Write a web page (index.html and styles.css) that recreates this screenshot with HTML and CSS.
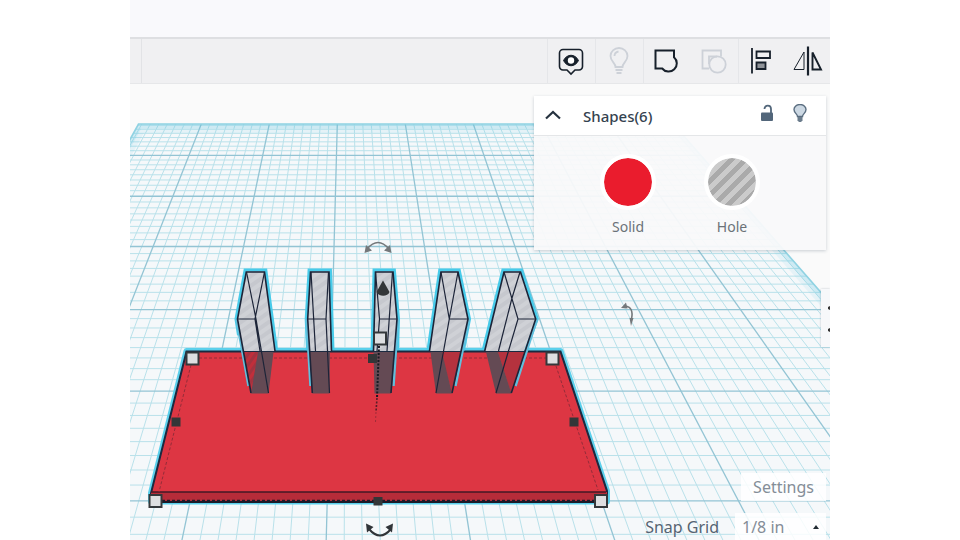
FILE: index.html
```html
<!DOCTYPE html>
<html lang="en">
<head>
<meta charset="utf-8">
<title>3D design editor</title>
<link rel="stylesheet" href="styles.css">
</head>
<body>
<div class="app">
  <header class="topbar"></header>
  <nav class="toolbar" aria-label="Tools">
    <div class="toolbar-lead"></div>
    <button class="tool" aria-label="Show all">
      <svg width="32" height="32" viewBox="0 0 32 32" fill="none" stroke="#17202b" stroke-width="1.6">
        <path d="M8 3.500h16a3.500 3.500 0 0 1 3.500 3.500v13.500a3.500 3.500 0 0 1-3.500 3.500h-4l-4 4-4-4H8A3.500 3.500 0 0 1 4.500 20.500V7A3.500 3.500 0 0 1 8 3.500z"/>
        <path d="M8.500 14.500c3.500-7 11.500-7 15 0-3.500 7-11.500 7-15 0z" fill="#17202b" stroke-width="1"/>
        <circle cx="16" cy="14.500" r="3.200" fill="#fff" stroke="none"/>
      </svg>
    </button>
    <button class="tool" aria-label="Toggle notes" disabled>
      <svg width="32" height="32" viewBox="0 0 32 32" fill="none" stroke="#cdd1d8" stroke-width="1.800">
        <path d="M12.500 21c0-4-5-5.500-5-11a8.500 8 0 0 1 17 0c0 5.500-5 7-5 11z"/>
        <path d="M11.500 10c0-2.500 1.500-4 4-4.500M12.500 24h7M13.500 27h5"/>
      </svg>
    </button>
    <button class="tool tool-pair" aria-label="Group">
      <svg width="32" height="32" viewBox="0 0 32 32" fill="none" stroke="#17202b" stroke-width="2">
        <path d="M4.500 4.500H23v6.700a8.200 8.200 0 1 1-11.800 11.300H4.500z"/>
      </svg>
    </button>
    <button class="tool tool-narrow" aria-label="Ungroup" disabled>
      <svg width="32" height="32" viewBox="0 0 32 32" fill="none" stroke="#cdd1d8" stroke-width="1.800">
        <path d="M11 22.500H4.500v-18H23v6"/><path d="M11 18v-7.500h8"/><circle cx="19.500" cy="18.500" r="8.200"/>
      </svg>
    </button>
    <button class="tool tool-narrow tool-pair" aria-label="Align">
      <svg width="32" height="32" viewBox="0 0 32 32" fill="none" stroke="#17202b" stroke-width="1.800">
        <path d="M7 2v25.500"/><path d="M11.500 5.500H25v6.500H11.500z"/><path d="M11.500 16.500h9v6.500h-9z" fill="#8f9399"/>
      </svg>
    </button>
    <button class="tool tool-narrow" aria-label="Mirror">
      <svg width="32" height="32" viewBox="0 0 32 32" fill="none" stroke="#17202b">
        <path d="M16 .5v29" stroke-width="2.200"/><path d="M12 6v17.500H2z" stroke-width="1"/><path d="M20.500 6.500v17h8.500z" stroke-width="1.900"/>
      </svg>
    </button>
  </nav>

  <main class="stage">
    <svg class="scene" viewBox="130 84 700 456" preserveAspectRatio="xMidYMin slice" aria-hidden="true">
      <defs>
        <pattern id="hatch" width="8" height="8" patternUnits="userSpaceOnUse" patternTransform="rotate(55)">
          <rect width="8" height="8" fill="#cfd1d6"/><rect width="4" height="8" fill="#c6c8ce"/>
        </pattern>
        <pattern id="redhatch" width="6" height="6" patternUnits="userSpaceOnUse" patternTransform="rotate(35)">
          <rect width="6" height="6" fill="#a33340"/><rect width="3" height="6" fill="#c02f3b"/>
        </pattern>
        <clipPath id="planeclip"><path d="M138.500 124H673.300L1038 540H-90z"/></clipPath>
      </defs>
      <path d="M138.500 124H673.300L1038 540H-90z" fill="#f5f8fa"/>
      <g clip-path="url(#planeclip)">
        <g id="minor" stroke="#b9e1ea" stroke-width="1"></g>
        <g id="major" stroke="#93c4d4" stroke-width="1.300"></g>
        <g fill="none" stroke="#58c0e0">
          <path d="M-90 540L138.500 124H673.300L1038 540" stroke-width="18" opacity=".1"/>
          <path d="M-90 540L138.500 124H673.300L1038 540" stroke-width="9" opacity=".16"/>
        </g>
      </g>
      <path d="M-90 540L138.500 124H673.300L1038 540" fill="none" stroke="#8fd2e2" stroke-width="1.600"/>

      <path d="M186.500 351H560.500L607 491V501.500H151V493z" fill="#dd3643" stroke="#5bd0ec" stroke-width="6" stroke-linejoin="round"/>
      <path d="M186.500 351.500H560.500L607 491V501.500H151V493z" fill="#dd3643" stroke="#1b2a40" stroke-width="2"/>
      <path d="M151 492H607V502H151z" fill="#b62c39"/>
      <path d="M151 492H606" stroke="#421825" stroke-width="1.600"/>
      <path d="M155 502H600" stroke="#1c1b28" stroke-width="2"/>
      <path d="M162 500.500H594" stroke="#1c1b28" stroke-width="1.500" stroke-dasharray="3 2"/>
      <path d="M199 358H546M191 365L159 492M556 366L598 490" fill="none" stroke="#932c39" stroke-width="1" stroke-dasharray="3 2"/>

      <!-- upright pieces: glow, body, buried part, edges -->
      <g fill="none" stroke="#48cbea" stroke-width="6" stroke-linejoin="miter">
        <path d="M240 335L237.500 319L246.300 271.500H264.500L275 350"/>
        <path d="M309 350L307.700 319L310.500 271.500H329L331.500 350"/>
        <path d="M373.500 350L375.500 271.500H393L397 319L396 350"/>
        <path d="M429.500 350L441 271.500H458L468 319L462 350"/>
        <path d="M484.700 350L504 271.500H520.500L535.700 319L524 350"/>
      </g>
      <g fill="none" stroke="#62bfdc" stroke-width="2.500">
        <path d="M236.500 319L248.500 386M306.500 319L310.500 386M398 319L393.500 386M469 319L455.500 386M537 319L515.500 386"/>
      </g>
      <g fill="url(#hatch)">
        <path d="M246.300 271.500H264.500L275 351H243.500L237.500 319z"/>
        <path d="M310.500 271.500H329L331.500 351H309.500L307.700 319z"/>
        <path d="M375.500 271.500H393L397 319L395 351H373.500z"/>
        <path d="M441 271.500H458L468 319L461.500 351H429.500z"/>
        <path d="M504 271.500H520.500L535.700 319L524 351H484.700z"/>
      </g>
      <path d="M243.500 352H260L251 393z" fill="url(#redhatch)"/>
      <g fill="#b5323e">
        <path d="M441 352H461L452 393z"/><path d="M498 352H524L511 393z"/>
      </g>
      <g fill="#644a54">
        <path d="M258 352H273.500L268.500 393.500H251z"/>
        <path d="M310 352H330L329.500 393.500H312.300z"/>
        <path d="M373.500 352H394L391 393.500H374.500z"/>
        <path d="M430.500 352H442L452 393.500H436z"/>
        <path d="M486 352H498L511.500 393.500H496z"/>
      </g>
      <g fill="none" stroke="#1c2438" stroke-width="1.600">
        <path d="M251 393L237.500 319L246.300 272H264.500L275 351"/>
        <path d="M246.500 272L256 319L268.500 393M264.500 272L255 319L260 351M237.500 319H256" stroke-width="1.200"/>
        <path d="M312.300 393L307.700 319L310.500 272H329L331.500 351"/>
        <path d="M311 272L315.500 351M328.500 272L326 319L329.500 393M307.700 319H326" stroke-width="1.200"/>
        <path d="M373.500 351L375.500 272H393L397 319L391 393"/>
        <path d="M375.500 272L379.500 319L377 351M392.500 272L387 351M379.500 319H397" stroke-width="1.200"/>
        <path d="M429.500 351L441 272H458L468 319L452 393"/>
        <path d="M441 272L449.300 319L436 393M458 272L449.300 319H468" stroke-width="1.200"/>
        <path d="M484.700 351L504 272H520.500L535.700 319L511.300 393"/>
        <path d="M504 272L518 319L496 393M520 272L512 298L498.500 351M518 319H535.700" stroke-width="1.200"/>
      </g>

      <path d="M379 346L377 398" stroke="#181a22" stroke-width="2" stroke-dasharray="2 1.500"/>
      <path d="M377 398L376 412" stroke="#5a1d28" stroke-width="1.600" stroke-dasharray="2 1.500"/>
      <path d="M376 412L375.500 422" stroke="#a02c38" stroke-width="1" stroke-dasharray="2 2"/>
      <g fill="#333638">
        <path d="M171.500 417.500h9v9h-9zM569.500 417.500h9v9h-9zM373.500 497h9v8.500h-9zM368 354h9v9h-9z"/>
        <path d="M383 280.500L389.500 292C388 297 378.500 297 376.500 292z"/>
      </g>
      <g fill="#dedfe1" stroke="#34383b" stroke-width="2">
        <path d="M186.500 352.500h12v12h-12zM546.500 352.500h12v12h-12zM149.500 495h12v12h-12zM595 495h12v12h-12zM374 332.500h12v12h-12z"/>
      </g>
      <g fill="none" stroke="#74787b" stroke-width="1.600">
        <path d="M367 249Q378 236 389 249"/><path d="M625 306Q634 307 631.500 319"/>
      </g>
      <path d="M364.500 253l1.500-8 6 5.500zM391.500 253l-1.500-8-6 5.500zM621 308l5-5.500 1.500 6zM631 326l-1.500-8h4z" fill="#74787b"/>
      <path d="M369 529Q380 542 391 529" fill="none" stroke="#303438" stroke-width="2"/>
      <path d="M366 523.500l1 9 6.500-5.500zM393 523.500l-1 9-6.500-5.500z" fill="#303438"/>
    </svg>

    <section class="inspector" aria-label="Shape inspector">
      <div class="inspector-head">
        <button class="icon-btn" aria-label="Collapse">
          <svg width="20" height="20" viewBox="0 0 20 20" fill="none" stroke="#26323f" stroke-width="2.200"><path d="M3 12.500L10 6L17 12.500"/></svg>
        </button>
        <h2 class="inspector-title">Shapes(6)</h2>
        <button class="icon-btn" aria-label="Lock">
          <svg width="20" height="20" viewBox="0 0 20 20"><path d="M7.500 5C7.500 .5 14 .5 14 5V10" fill="none" stroke="#52667a" stroke-width="1.800"/><rect x="4" y="8.500" width="12" height="8.500" rx="1" fill="#52667a"/></svg>
        </button>
        <button class="icon-btn" aria-label="Hide">
          <svg width="20" height="20" viewBox="0 0 20 20" fill="#ccd8e3" stroke="#5b6e80" stroke-width="1.400"><path d="M7.500 12.500C7.500 10 4 9 4 5.500a6 5 0 0 1 12 0c0 3.500-3.500 4.500-3.500 7z"/><path d="M7.500 13h5v3.500l-1.500 1.500H9l-1.500-1.500z" fill="#6b7c8c" stroke="none"/></svg>
        </button>
      </div>
      <div class="inspector-body">
        <button class="swatch"><span class="swatch-dot solid"></span>Solid</button>
        <button class="swatch"><span class="swatch-dot hole"></span>Hole</button>
      </div>
    </section>

    <button class="side-tab" aria-label="Open panel">
      <svg width="2" height="28" viewBox="0 0 2 28" fill="#333"><path d="M0 3l2-1v4l-2-1zM0 25l2-1v4l-2-1z"/></svg>
    </button>

    <div class="grid-controls">
      <button class="settings">Settings</button>
      <div class="snap">
        <label for="snap">Snap Grid</label>
        <span class="snap-field">
          <select id="snap"><option>1/8 in</option></select>
          <svg class="caret" width="6" height="4" viewBox="0 0 6 4"><path d="M0 4L3 0L6 4z" fill="#222b33"/></svg>
        </span>
      </div>
    </div>
  </main>
</div>
<script src="grid.js"></script>
</body>
</html>
```
FILE: grid.js
```js
// One-point perspective grid: eight minor cells per major cell.
const VX = 347.2, VY = -247, TOP = 124, BOTTOM = 560;
const depth = TOP - VY;
function addLine(major, x1, y1, x2, y2) {
  const line = document.createElementNS("http://www.w3.org/2000/svg", "line");
  line.setAttribute("x1", x1);
  line.setAttribute("y1", y1);
  line.setAttribute("x2", x2);
  line.setAttribute("y2", y2);
  document.getElementById(major ? "major" : "minor").appendChild(line);
}
for (let k = -7; k <= 55; k++) {
  const x = 201.3 + 8.5 * k;
  addLine(k % 8 === 0, x, TOP, VX + (x - VX) * (BOTTOM - VY) / depth, BOTTOM);
}
for (let n = -7; n <= 43; n++) {
  const y = VY + 1 / (0.0024857 - 0.00002871 * n);
  addLine(n % 8 === 0, -100, y, 1100, y);
}
```
FILE: styles.css
```css
* { box-sizing: border-box; }
body {
  margin: 0;
  background: #fff;
  font-family: "Noto Sans", "Open Sans", sans-serif;
  color: #566472;
}
button, select { font: inherit; color: inherit; border: 0; background: none; padding: 0; }
.app {
  display: flex;
  flex-direction: column;
  height: 100vh;
  margin: 0 130px;
  overflow: hidden;
}
.topbar { flex: 0 0 37px; background: #f9f9fc; }
.toolbar {
  flex: 0 0 47px;
  display: flex;
  background: #f0f0f2;
  border-top: 2px solid #dedfe2;
  border-bottom: 1px solid #e6e7e9;
}
.toolbar-lead { flex: 1; margin-left: 11px; border-left: 1px solid #e2e3e6; }
.tool {
  flex: 0 0 48px;
  display: flex;
  align-items: center;
  justify-content: center;
  padding: 2px 2px 0 0;
  border-left: 1px solid #e5e6e9;
}
.tool-narrow { flex-basis: 47px; }
.tool-pair + .tool { border-left: 0; }
.tool:last-child { margin-right: -2px; }
.stage { position: relative; flex: 1; min-height: 0; background: #fafafa; overflow: hidden; }
.scene { position: absolute; inset: 0; width: 100%; height: 100%; }

.inspector {
  position: absolute;
  top: 12px;
  right: 4px;
  width: 292px;
  background: rgba(249, 249, 250, .94);
  box-shadow: 0 1px 3px rgba(60, 80, 100, .25);
}
.inspector-head {
  display: flex;
  align-items: center;
  gap: 13px;
  height: 40px;
  padding: 0 16px 0 9px;
  background: #fff;
  border-bottom: 1px solid #e4e6e8;
}
.inspector-title { flex: 1; margin: 0 0 0 7px; font-size: 15px; font-weight: 500; line-height: 20px; color: #34424f; }
.icon-btn { display: flex; }
.inspector-head .icon-btn:nth-of-type(n+2) { margin-bottom: 4px; }
.inspector-body { display: flex; justify-content: center; gap: 48px; padding: 18px 0 13px; }
.swatch {
  display: flex;
  flex-direction: column;
  align-items: center;
  gap: 7px;
  width: 56px;
  font-size: 14px;
  line-height: 20px;
  color: #6b7278;
}
.swatch-dot { width: 56px; height: 56px; border: 4px solid #fff; border-radius: 50%; background-clip: padding-box; }
.solid { background-color: #ea1c2d; }
.hole { background-image: repeating-linear-gradient(135deg, #cbcbcb 0 5px, #aaa 5px 10px); }

.side-tab {
  position: absolute;
  top: 205px;
  right: 0;
  display: flex;
  align-items: center;
  justify-content: flex-end;
  width: 9px;
  height: 58px;
  background: #f7f8fa;
  box-shadow: 0 0 2px rgba(60, 80, 100, .3);
}

.grid-controls {
  position: absolute;
  right: 4px;
  bottom: 0;
  display: flex;
  flex-direction: column;
  align-items: flex-end;
  gap: 12px;
  font-size: 16px;
}
.settings { height: 28px; padding: 0 12px; background: rgba(255, 255, 255, .85); color: #848d97; }
.snap { display: flex; align-items: center; gap: 16px; }
.snap-field { position: relative; display: flex; align-items: center; }
.snap select { width: 91px; height: 27px; padding-left: 7px; appearance: none; background: rgba(255, 255, 255, .85); color: #848d97; }
.caret { position: absolute; right: 7px; }
```
